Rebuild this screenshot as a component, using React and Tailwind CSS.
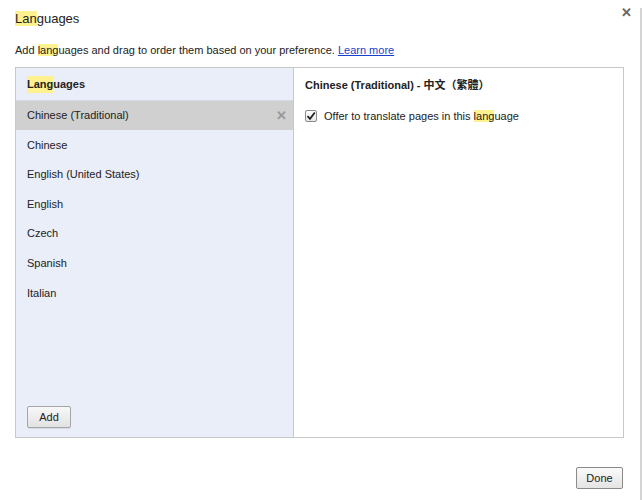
import React from "react";

const HL = ({ children }) => <span className="bg-[#fdf28f]">{children}</span>;

export default function App() {
  const items = ["Chinese", "English (United States)", "English", "Czech", "Spanish", "Italian"];
  return (
    <div className="relative w-[642px] h-[500px] bg-white text-[#222] overflow-hidden" style={{ fontFamily: '"Liberation Sans", Arial, "Noto Sans CJK TC", sans-serif' }}>
      <div className="absolute right-0 top-[8px] bottom-0 w-[2px] bg-[#d4d4d4]" />
      <button className="absolute left-[621px] top-[6px] text-[#666] text-[13px] font-bold leading-none">✕</button>
      <div className="flex flex-col pl-[15px] pr-[18px] pt-[10px]">
        <h1 className="text-[13px] leading-[18px] font-normal text-[#222]"><HL>Lan</HL>guages</h1>
        <p className="mt-[15px] text-[11px] leading-[14px] text-[#222]">
          Add <HL>lang</HL>uages and drag to order them based on your preference. <a className="text-[#1a3fcc] underline">Learn more</a>
        </p>
        <div className="mt-[10px] flex h-[371px] border border-[#c8c8c8]">
          <div className="w-[278px] flex flex-col bg-[#e9eef9] border-r border-[#c8c8c8]">
            <div className="h-[33px] flex items-center pl-[11px] pt-[1px] text-[11px] font-bold border-b border-[#d6dae3]"><HL>Lang</HL>uages</div>
            <div className="h-[29px] flex items-center justify-between pl-[11px] pr-[6px] bg-[#d0d0d0] text-[11px]">
              <span>Chinese (Traditional)</span>
              <span className="text-[#999] text-[13px] font-bold leading-none">✕</span>
            </div>
            {items.map((t) => (
              <div key={t} className="h-[29.6px] flex items-center pl-[11px] text-[11px]">{t}</div>
            ))}
            <div className="flex-1" />
            <div className="pl-[11px] pb-[9px]">
              <button className="h-[22px] w-[44px] text-[11px] border border-[#a6a6a6] rounded-[2px] bg-gradient-to-b from-[#f8f8f8] to-[#e2e2e2] shadow-[0_1px_0_rgba(0,0,0,0.08)]">Add</button>
            </div>
          </div>
          <div className="flex-1 flex flex-col pl-[11px] pt-[10px]">
            <div className="text-[11px] font-bold leading-[14px]">Chinese (Traditional) - 中文（繁體）</div>
            <label className="mt-[16px] flex items-center gap-[7px] text-[11px]">
              <span className="w-[12px] h-[12px] border border-[#8a8a8a] rounded-[2px] bg-gradient-to-b from-white to-[#e6e6e6] flex items-center justify-center">
                <svg width="10" height="10" viewBox="0 0 10 10"><path d="M1.5 5.2 L4 7.8 L8.8 1.5" fill="none" stroke="#222" strokeWidth="1.8" /></svg>
              </span>
              <span>Offer to translate pages in this <HL>lang</HL>uage</span>
            </label>
          </div>
        </div>
        <div className="flex justify-end mt-[29px] pr-[1px]">
          <button className="h-[22px] w-[47px] text-[11px] border border-[#8a8a8a] rounded-[2px] bg-gradient-to-b from-[#fafafa] to-[#e4e4e4]">Done</button>
        </div>
      </div>
    </div>
  );
}
